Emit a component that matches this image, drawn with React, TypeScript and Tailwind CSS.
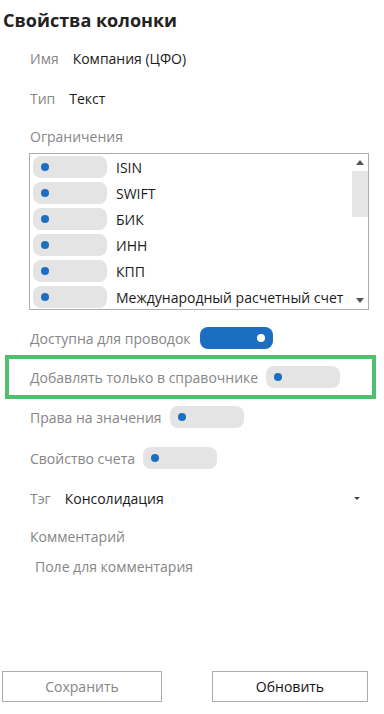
import React from "react";

const items = ["ISIN", "SWIFT", "БИК", "ИНН", "КПП", "Международный расчетный счет"];

function Toggle({ on = false }: { on?: boolean }) {
  if (on) {
    return (
      <div className="relative h-[22px] w-[73px] shrink-0 rounded-[8px] bg-[#1b6ec2]">
        <div className="absolute right-[8px] top-[7px] h-[8px] w-[8px] rounded-full bg-white" />
      </div>
    );
  }
  return (
    <div className="relative h-[22px] w-[74px] shrink-0 rounded-[8px] bg-[#e4e4e4]">
      <div className="absolute left-[8px] top-[7px] h-[8px] w-[8px] rounded-full bg-[#1b6ec2]" />
    </div>
  );
}

export default function App() {
  return (
    <div
      className="flex h-[714px] w-[384px] flex-col bg-white text-[14px] text-[#1a1a1a]"
      style={{ fontFamily: '"Open Sans", "Noto Sans", sans-serif' }}
    >
      <div className="flex h-[40px] items-center pl-[3px] text-[18px] font-bold text-[#222]">Свойства колонки</div>

      <div className="flex h-[36px] items-center gap-[14px] pl-[30px]">
        <span className="text-[#868686]">Имя</span>
        <span>Компания (ЦФО)</span>
      </div>

      <div className="flex h-[44px] items-center gap-[14px] pl-[30px]">
        <span className="text-[#868686]">Тип</span>
        <span>Текст</span>
      </div>

      <div className="flex h-[33px] items-center pl-[30px] text-[#868686]">Ограничения</div>

      <div className="ml-[29px] flex h-[157px] w-[340px] border border-[#acacac]">
        <div className="flex flex-1 flex-col gap-[4px] pl-[3px] pt-[2px]">
          {items.map((t) => (
            <div key={t} className="flex h-[22px] items-center gap-[9px]">
              <Toggle />
              <span className="whitespace-nowrap">{t}</span>
            </div>
          ))}
        </div>
        <div className="flex w-[16px] flex-col items-center">
          <div className="flex h-[17px] items-center justify-center">
            <div className="h-0 w-0 border-x-[4px] border-b-[5px] border-x-transparent border-b-[#555]" />
          </div>
          <div className="h-[46px] w-full bg-[#e6e6e6]" />
          <div className="flex-1" />
          <div className="flex h-[17px] items-center justify-center">
            <div className="h-0 w-0 border-x-[4px] border-t-[5px] border-x-transparent border-t-[#555]" />
          </div>
        </div>
      </div>

      <div className="mt-[17px] flex h-[22px] items-center gap-[9px] pl-[30px]">
        <span className="text-[#868686]">Доступна для проводок</span>
        <Toggle on />
      </div>

      <div className="ml-[5px] mt-[6px] flex h-[44px] w-[371px] items-center gap-[8px] border-[4px] border-[#52bf6e] pl-[21px]">
        <span className="text-[#868686]">Добавлять только в справочнике</span>
        <Toggle />
      </div>

      <div className="mt-[7px] flex h-[22px] items-center gap-[8px] pl-[30px]">
        <span className="text-[#868686]">Права на значения</span>
        <Toggle />
      </div>

      <div className="mt-[19px] flex h-[22px] items-center gap-[8px] pl-[30px]">
        <span className="text-[#868686]">Свойство счета</span>
        <Toggle />
      </div>

      <div className="mt-[18px] flex h-[22px] items-center pl-[30px] pr-[24px]">
        <span className="text-[#868686]">Тэг</span>
        <span className="ml-[14px] flex-1">Консолидация</span>
        <div className="h-0 w-0 border-x-[3px] border-t-[3px] border-x-transparent border-t-[#444]" />
      </div>

      <div className="mt-[16px] flex h-[22px] items-center pl-[30px] text-[#868686]">Комментарий</div>

      <div className="mt-[8px] flex h-[22px] items-center pl-[35px] text-[#868686]">Поле для комментария</div>

      <div className="mt-auto flex pb-[12px] pl-[2px]">
        <button className="h-[31px] w-[160px] border border-[#acacac] bg-white text-[#868686]">Сохранить</button>
        <button className="ml-[50px] h-[31px] w-[156px] border border-[#acacac] bg-white text-[#111]">Обновить</button>
      </div>
    </div>
  );
}
